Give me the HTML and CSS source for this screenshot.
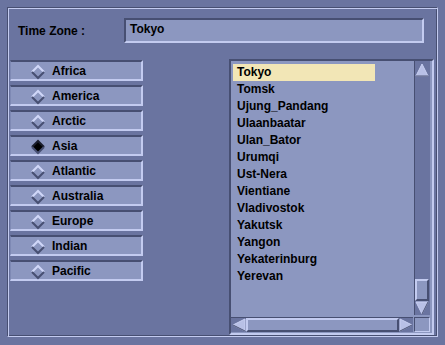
FILE: index.html
```html
<!DOCTYPE html>
<html lang="en">

<head>
	<meta charset="UTF-8" />
	<meta name="viewport" content="width=device-width,initial-scale=1" />
	<title>Time Zone</title>
	<link rel="stylesheet" href="styles.css">
</head>

<body>
	<div class="frame">
		<div class="header">
			<span class="label">Time Zone :</span>
			<div class="field">Tokyo</div>
		</div>

		<div class="main">
			<div class="regions">
				<button class="region"><svg class="dia" viewBox="0 0 14 14"><polygon class="face" points="7,1 13,7 7,13 1,7" /><polyline class="hi" points="1,7 7,1 13,7" /><polyline class="lo" points="13,7 7,13 1,7" /></svg>Africa</button>
				<button class="region"><svg class="dia" viewBox="0 0 14 14"><polygon class="face" points="7,1 13,7 7,13 1,7" /><polyline class="hi" points="1,7 7,1 13,7" /><polyline class="lo" points="13,7 7,13 1,7" /></svg>America</button>
				<button class="region"><svg class="dia" viewBox="0 0 14 14"><polygon class="face" points="7,1 13,7 7,13 1,7" /><polyline class="hi" points="1,7 7,1 13,7" /><polyline class="lo" points="13,7 7,13 1,7" /></svg>Arctic</button>
				<button class="region on"><svg class="dia" viewBox="0 0 14 14"><polygon class="face" points="7,1 13,7 7,13 1,7" /><polyline class="hi" points="1,7 7,1 13,7" /><polyline class="lo" points="13,7 7,13 1,7" /></svg>Asia</button>
				<button class="region"><svg class="dia" viewBox="0 0 14 14"><polygon class="face" points="7,1 13,7 7,13 1,7" /><polyline class="hi" points="1,7 7,1 13,7" /><polyline class="lo" points="13,7 7,13 1,7" /></svg>Atlantic</button>
				<button class="region"><svg class="dia" viewBox="0 0 14 14"><polygon class="face" points="7,1 13,7 7,13 1,7" /><polyline class="hi" points="1,7 7,1 13,7" /><polyline class="lo" points="13,7 7,13 1,7" /></svg>Australia</button>
				<button class="region"><svg class="dia" viewBox="0 0 14 14"><polygon class="face" points="7,1 13,7 7,13 1,7" /><polyline class="hi" points="1,7 7,1 13,7" /><polyline class="lo" points="13,7 7,13 1,7" /></svg>Europe</button>
				<button class="region"><svg class="dia" viewBox="0 0 14 14"><polygon class="face" points="7,1 13,7 7,13 1,7" /><polyline class="hi" points="1,7 7,1 13,7" /><polyline class="lo" points="13,7 7,13 1,7" /></svg>Indian</button>
				<button class="region"><svg class="dia" viewBox="0 0 14 14"><polygon class="face" points="7,1 13,7 7,13 1,7" /><polyline class="hi" points="1,7 7,1 13,7" /><polyline class="lo" points="13,7 7,13 1,7" /></svg>Pacific</button>
			</div>

			<div class="list">
				<ul class="items">
					<li class="sel">Tokyo</li>
					<li>Tomsk</li>
					<li>Ujung_Pandang</li>
					<li>Ulaanbaatar</li>
					<li>Ulan_Bator</li>
					<li>Urumqi</li>
					<li>Ust-Nera</li>
					<li>Vientiane</li>
					<li>Vladivostok</li>
					<li>Yakutsk</li>
					<li>Yangon</li>
					<li>Yekaterinburg</li>
					<li>Yerevan</li>
				</ul>
				<div class="vscroll">
					<div class="arrow"><svg viewBox="0 0 14 14"><polygon class="tri" points="7,1 13,13 1,13" /><polyline class="tri-lo" points="13,13 1,13" /></svg></div>
					<div class="trough v"><div class="thumb vthumb"></div></div>
					<div class="arrow"><svg viewBox="0 0 14 14"><polygon class="tri" points="1,1 13,1 7,13" /><polyline class="tri-lo" points="13,1 7,13" /></svg></div>
				</div>
				<div class="hscroll">
					<div class="arrow"><svg viewBox="0 0 14 14"><polygon class="tri" points="1,7 13,1 13,13" /><polyline class="tri-lo" points="13,13 1,7" /></svg></div>
					<div class="trough h"><div class="thumb hthumb"></div></div>
					<div class="arrow"><svg viewBox="0 0 14 14"><polygon class="tri" points="1,1 13,7 1,13" /><polyline class="tri-lo" points="13,7 1,13" /></svg></div>
				</div>
				<div class="corner"></div>
			</div>
		</div>
	</div>
</body>

</html>
```

FILE: styles.css
```css
* {
	box-sizing: border-box;
	margin: 0;
	padding: 0;
}

html,
body {
	width: 445px;
	height: 345px;
	background: #6a74a0;
	font-family: 'Liberation Sans', Arial, sans-serif;
	font-weight: bold;
	font-size: 12px;
	color: #000;
	overflow: hidden;
}

/* etched outer frame */
.frame {
	margin: 7px;
	width: 431px;
	height: 330px;
	border: 1px solid;
	border-color: #474f72 #c3cbf0 #c3cbf0 #474f72;
	box-shadow: inset 1px 1px #c3cbf0, inset -1px -1px #474f72;
	padding: 1px;
	display: flex;
	flex-direction: column;
}

.header {
	display: flex;
	align-items: center;
	padding: 9px 12px 0 9px;
}

.label {
	width: 106px;
}

.field {
	flex: 1;
	height: 25px;
	padding: 2px 4px 0;
	background: #8c97c0;
	border: 2px solid;
	border-color: #474f72 #c3cbf0 #c3cbf0 #474f72;
}

.main {
	flex: 1;
	display: flex;
	gap: 86px;
	margin-top: 16px;
	padding-left: 1px;
}

.regions {
	width: 133px;
	margin-top: 1px;
	display: flex;
	flex-direction: column;
	gap: 4px;
}

.region {
	height: 21px;
	display: flex;
	align-items: center;
	gap: 7px;
	padding-left: 20px;
	background: #8c97c0;
	border: 2px solid;
	border-left-width: 1px;
	border-color: #474f72 #c3cbf0 #c3cbf0 #7e89b4;
	font: inherit;
	color: inherit;
}

.dia {
	width: 14px;
	height: 14px;
	margin-top: 2px;
	overflow: visible;
}

.dia .face {
	fill: #8c97c0;
}

.dia .hi {
	fill: none;
	stroke: #d0d7f8;
	stroke-width: 2;
}

.dia .lo {
	fill: none;
	stroke: #474f72;
	stroke-width: 2;
}

.region.on .face {
	fill: #000;
}

.region.on .hi {
	stroke: #1a1d2c;
}

.region.on .lo {
	stroke: #474f72;
}

/* scrolled list */
.list {
	width: 205px;
	display: grid;
	grid-template-columns: 1fr 16px;
	grid-template-rows: 1fr 15px;
	column-gap: 1px;
	row-gap: 2px;
	padding: 0 2px 1px 0;
	background: #8c97c0;
	border: 2px solid;
	border-color: #474f72 #c3cbf0 #c3cbf0 #474f72;
}

.items {
	list-style: none;
	padding: 3px 0 0 2px;
}

.items li {
	height: 17px;
	line-height: 17px;
	padding-left: 4px;
	width: 142px;
	white-space: nowrap;
}

.items .sel {
	background: #f2e6b6;
}

.vscroll,
.hscroll {
	display: flex;
	background: #6a74a0;
}

.vscroll {
	flex-direction: column;
	padding-top: 2px;
	border-left: 1px solid #474f72;
}

.hscroll {
	border-top: 1px solid #474f72;
	padding-left: 1px;
}

.arrow {
	width: 14px;
	height: 14px;
	flex: none;
}

.arrow svg {
	width: 14px;
	height: 14px;
	display: block;
}

.tri {
	fill: #b8c0e6;
	stroke: #c9d0f2;
	stroke-width: 1;
}

.tri-lo {
	fill: none;
	stroke: #474f72;
	stroke-width: 1;
}

.trough {
	flex: 1;
	display: flex;
}

.trough.v {
	flex-direction: column;
	justify-content: flex-end;
}

.thumb {
	background: #8c97c0;
	border: 2px solid;
	border-color: #c3cbf0 #474f72 #474f72 #c3cbf0;
}

.vthumb {
	height: 22px;
	width: 14px;
}

.hthumb {
	flex: 1;
	height: 14px;
}

.corner {
	background: #8c97c0;
	border: 1px solid;
	border-color: #474f72 #c3cbf0 #c3cbf0 #474f72;
}
```
